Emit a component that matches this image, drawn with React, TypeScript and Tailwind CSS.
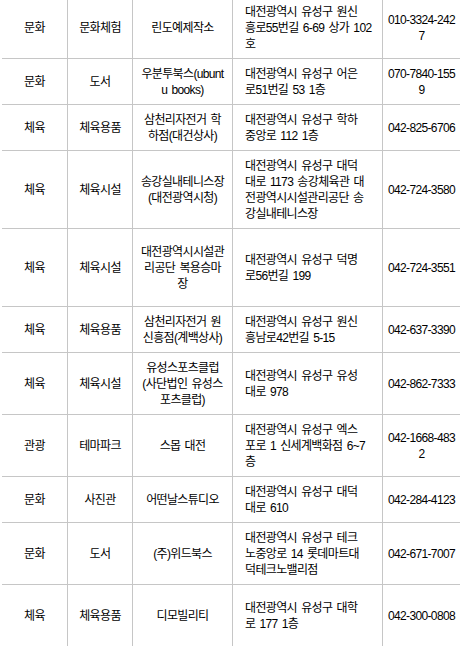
const rows = [
  { h: "h-[62px]", a: "문화", b: "문화체험", c: "린도예제작소", d: "대전광역시 유성구 원신\n흥로55번길 6-69 상가 102\n호", e: "010-3324-242\n7" },
  { h: "h-[46px]", a: "문화", b: "도서", c: "우분투북스(ubunt\nu books)", d: "대전광역시 유성구 어은\n로51번길 53 1층", e: "070-7840-155\n9" },
  { h: "h-[46px]", a: "체육", b: "체육용품", c: "삼천리자전거 학\n하점(대건상사)", d: "대전광역시 유성구 학하\n중앙로 112 1층", e: "042-825-6706" },
  { h: "h-[78px]", a: "체육", b: "체육시설", c: "송강실내테니스장\n(대전광역시청)", d: "대전광역시 유성구 대덕\n대로 1173 송강체육관 대\n전광역시시설관리공단 송\n강실내테니스장", e: "042-724-3580" },
  { h: "h-[78px]", a: "체육", b: "체육시설", c: "대전광역시시설관\n리공단 복용승마\n장", d: "대전광역시 유성구 덕명\n로56번길 199", e: "042-724-3551" },
  { h: "h-[46px]", a: "체육", b: "체육용품", c: "삼천리자전거 원\n신흥점(계백상사)", d: "대전광역시 유성구 원신\n흥남로42번길 5-15", e: "042-637-3390" },
  { h: "h-[62px]", a: "체육", b: "체육시설", c: "유성스포츠클럽\n(사단법인 유성스\n포츠클럽)", d: "대전광역시 유성구 유성\n대로 978", e: "042-862-7333" },
  { h: "h-[62px]", a: "관광", b: "테마파크", c: "스몹 대전", d: "대전광역시 유성구 엑스\n포로 1 신세계백화점 6~7\n층", e: "042-1668-483\n2" },
  { h: "h-[46px]", a: "문화", b: "사진관", c: "어떤날스튜디오", d: "대전광역시 유성구 대덕\n대로 610", e: "042-284-4123" },
  { h: "h-[62px]", a: "문화", b: "도서", c: "(주)위드북스", d: "대전광역시 유성구 테크\n노중앙로 14 롯데마트대\n덕테크노밸리점", e: "042-671-7007" },
  { h: "h-[62px]", a: "체육", b: "체육용품", c: "디모빌리티", d: "대전광역시 유성구 대학\n로 177 1층", e: "042-300-0808" },
]

const cell = "flex items-center whitespace-pre-line leading-[16px]"

export default function App() {
  return (
    <div
      className="w-[460px] h-[646px] overflow-hidden bg-white text-[12px] tracking-[-0.65px] [word-spacing:1.5px] text-black"
      style={{ fontFamily: '"Liberation Sans", "Noto Sans CJK KR", sans-serif' }}
    >
      <div className="-mt-[3px] ml-[2px]">
        {rows.map((r, i) => (
          <div key={i} className={`flex border-b border-[#c6c6c6] ${r.h}`}>
            <div className={`${cell} w-[66px] shrink-0 justify-center text-center border-r border-[#c6c6c6]`}>{r.a}</div>
            <div className={`${cell} w-[65px] shrink-0 justify-center text-center border-r border-[#c6c6c6]`}>{r.b}</div>
            <div className={`${cell} w-[100px] shrink-0 justify-center text-center border-r border-[#c6c6c6]`}>{r.c}</div>
            <div className={`${cell} w-[150px] shrink-0 pl-[12px] border-r border-[#c6c6c6]`}>{r.d}</div>
            <div className={`${cell} flex-1 justify-center text-center`}>{r.e}</div>
          </div>
        ))}
      </div>
    </div>
  )
}
